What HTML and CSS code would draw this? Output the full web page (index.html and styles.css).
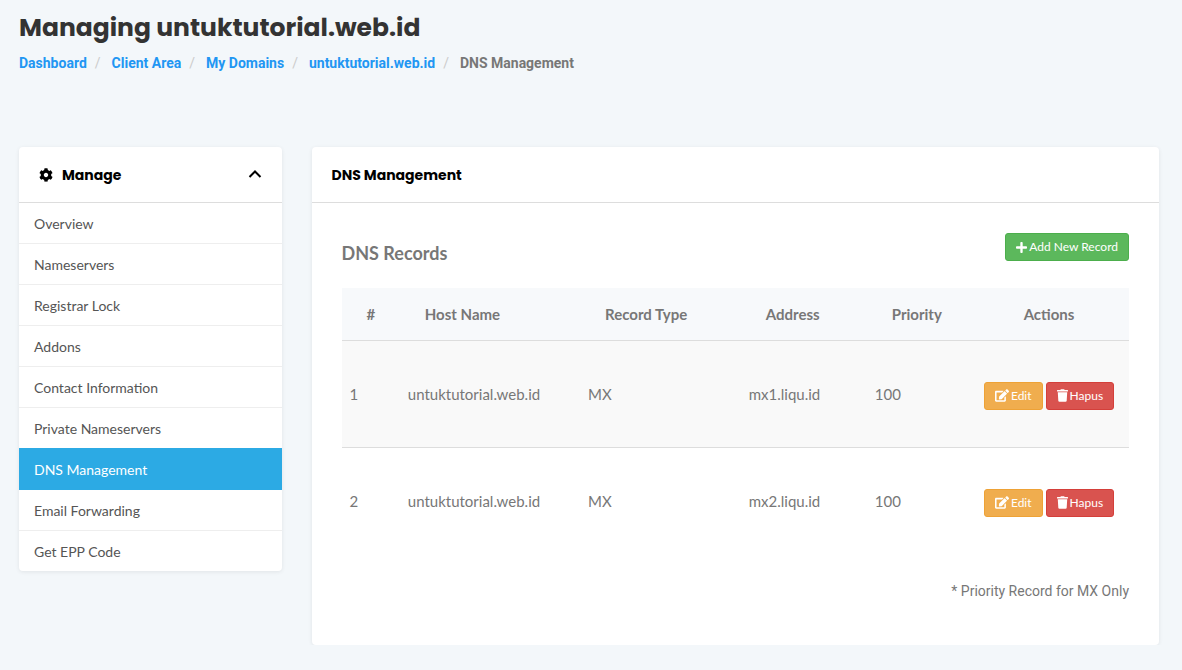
FILE: index.html
```
<!DOCTYPE html>
<html lang="en">
<head>
    <meta charset="UTF-8">
    <meta name="viewport" content="width=device-width, initial-scale=1.0">
    <title>Managing untuktutorial.web.id</title>
    <link rel="stylesheet" href="styles.css">
</head>
<body>
<svg class="sprite" aria-hidden="true">
    <symbol id="icon-edit" viewBox="0 0 576 512"><path d="M402.6 83.2l90.2 90.2c3.8 3.8 3.8 10 0 13.8L274.4 405.6l-92.8 10.3c-12.4 1.4-22.9-9.1-21.5-21.5l10.3-92.8L388.8 83.2c3.8-3.8 10-3.8 13.8 0zm162-22.9l-48.8-48.8c-15.2-15.2-39.9-15.2-55.2 0l-35.4 35.4c-3.8 3.8-3.8 10 0 13.8l90.2 90.2c3.8 3.8 10 3.8 13.8 0l35.4-35.4c15.2-15.3 15.2-40 0-55.2zM384 346.2V448H64V128h229.8c3.2 0 6.2-1.3 8.5-3.5l40-40c7.6-7.6 2.2-20.5-8.5-20.5H48C21.5 64 0 85.5 0 112v352c0 26.5 21.5 48 48 48h352c26.5 0 48-21.5 48-48V306.2c0-10.7-12.9-16-20.5-8.5l-40 40c-2.2 2.3-3.5 5.3-3.5 8.5z"/></symbol>
    <symbol id="icon-trash" viewBox="0 0 448 512"><path d="M432 32H312l-9.4-18.7A24 24 0 0 0 281.1 0H166.8a23.72 23.72 0 0 0-21.4 13.3L136 32H16A16 16 0 0 0 0 48v32a16 16 0 0 0 16 16h416a16 16 0 0 0 16-16V48a16 16 0 0 0-16-16zM53.2 467a48 48 0 0 0 47.9 45h245.8a48 48 0 0 0 47.9-45L416 128H32z"/></symbol>
</svg>
<div class="container">
    <header class="page-header">
        <h1>Managing untuktutorial.web.id</h1>
        <nav aria-label="Breadcrumb">
            <ol class="breadcrumb">
                <li><a href="#">Dashboard</a></li>
                <li><a href="#">Client Area</a></li>
                <li><a href="#">My Domains</a></li>
                <li><a href="#">untuktutorial.web.id</a></li>
                <li class="active">DNS Management</li>
            </ol>
        </nav>
    </header>
    <div class="row">
        <aside class="col-side">
            <div class="panel">
                <div class="panel-heading">
                    <svg class="icon-cog" viewBox="0 0 512 512"><path d="M487.4 315.7l-42.6-24.6c4.3-23.2 4.3-47 0-70.2l42.6-24.6c4.9-2.8 7.1-8.6 5.5-14-11.1-35.6-30-67.8-54.7-94.6-3.8-4.1-10-5.1-14.8-2.3L380.8 110c-17.9-15.4-38.5-27.3-60.8-35.1V25.8c0-5.6-3.9-10.5-9.4-11.7-36.7-8.2-74.3-7.8-109.2 0-5.5 1.2-9.4 6.1-9.4 11.7V75c-22.2 7.9-42.8 19.8-60.8 35.1L88.7 85.5c-4.9-2.8-11-1.9-14.8 2.3-24.7 26.7-43.6 58.9-54.7 94.6-1.7 5.4.6 11.2 5.5 14L67.3 221c-4.3 23.2-4.3 47 0 70.2l-42.6 24.6c-4.9 2.8-7.1 8.6-5.5 14 11.1 35.6 30 67.8 54.7 94.6 3.8 4.1 10 5.1 14.8 2.3l42.6-24.6c17.9 15.4 38.5 27.3 60.8 35.1v49.2c0 5.6 3.9 10.5 9.4 11.7 36.7 8.2 74.3 7.8 109.2 0 5.5-1.2 9.4-6.1 9.4-11.7v-49.2c22.2-7.9 42.8-19.8 60.8-35.1l42.6 24.6c4.9 2.8 11 1.9 14.8-2.3 24.7-26.7 43.6-58.9 54.7-94.6 1.5-5.5-.7-11.3-5.6-14.1zM256 336c-44.1 0-80-35.9-80-80s35.9-80 80-80 80 35.9 80 80-35.9 80-80 80z"/></svg>
                    <h2>Manage</h2>
                    <button class="panel-toggle" type="button" aria-label="Toggle menu">
                        <svg viewBox="0 0 14 14"><polyline points="1.5,9 7,3.5 12.5,9"/></svg>
                    </button>
                </div>
                <nav class="list-group">
                    <a href="#">Overview</a>
                    <a href="#">Nameservers</a>
                    <a href="#">Registrar Lock</a>
                    <a href="#">Addons</a>
                    <a href="#">Contact Information</a>
                    <a href="#">Private Nameservers</a>
                    <a href="#" class="active">DNS Management</a>
                    <a href="#">Email Forwarding</a>
                    <a href="#">Get EPP Code</a>
                </nav>
            </div>
        </aside>
        <main class="col-main">
            <div class="panel">
                <div class="panel-heading">
                    <h2>DNS Management</h2>
                </div>
                <div class="panel-body">
                    <div class="toolbar">
                        <h3>DNS Records</h3>
                        <button type="button" class="btn btn-success"><svg class="icon-plus" viewBox="0 0 448 512"><path d="M416 208H272V64c0-17.67-14.33-32-32-32h-32c-17.67 0-32 14.33-32 32v144H32c-17.67 0-32 14.33-32 32v32c0 17.67 14.33 32 32 32h144v144c0 17.67 14.33 32 32 32h32c17.67 0 32-14.33 32-32V304h144c17.67 0 32-14.33 32-32v-32c0-17.67-14.33-32-32-32z"/></svg>Add New Record</button>
                    </div>
                    <table class="table">
                        <colgroup>
                            <col class="c-num"><col class="c-host"><col class="c-type">
                            <col class="c-addr"><col class="c-prio"><col class="c-act">
                        </colgroup>
                        <thead>
                            <tr>
                                <th>#</th>
                                <th>Host Name</th>
                                <th>Record Type</th>
                                <th>Address</th>
                                <th>Priority</th>
                                <th class="actions">Actions</th>
                            </tr>
                        </thead>
                        <tbody>
                            <tr>
                                <td>1</td>
                                <td>untuktutorial.web.id</td>
                                <td>MX</td>
                                <td>mx1.liqu.id</td>
                                <td>100</td>
                                <td>
                                    <div class="btn-row">
                                        <button type="button" class="btn btn-warning"><svg class="icon-edit"><use href="#icon-edit"/></svg>Edit</button>
                                        <button type="button" class="btn btn-danger"><svg class="icon-trash"><use href="#icon-trash"/></svg>Hapus</button>
                                    </div>
                                </td>
                            </tr>
                            <tr>
                                <td>2</td>
                                <td>untuktutorial.web.id</td>
                                <td>MX</td>
                                <td>mx2.liqu.id</td>
                                <td>100</td>
                                <td>
                                    <div class="btn-row">
                                        <button type="button" class="btn btn-warning"><svg class="icon-edit"><use href="#icon-edit"/></svg>Edit</button>
                                        <button type="button" class="btn btn-danger"><svg class="icon-trash"><use href="#icon-trash"/></svg>Hapus</button>
                                    </div>
                                </td>
                            </tr>
                        </tbody>
                    </table>
                    <p class="note">* Priority Record for MX Only</p>
                </div>
            </div>
        </main>
    </div>
</div>
</body>
</html>
```
FILE: styles.css
```
* {
  box-sizing: border-box;
}
body {
  margin: 0;
  background-color: #f3f7fa;
  color: #777;
  font-family: Roboto, sans-serif;
  font-size: 14px;
  line-height: 20px;
}
.sprite {
  display: none;
}
svg {
  fill: currentColor;
  flex: none;
}
.container {
  padding: 12px 23px 0 19px;
}
.page-header {
  height: 135px;
}
h1, h2, h3 {
  margin: 0;
}
h1 {
  color: #333;
  font-family: Poppins, Inter, sans-serif;
  font-size: 25px;
  font-weight: 700;
  line-height: 32px;
}
.breadcrumb {
  display: flex;
  list-style: none;
  margin: 9px 0 0;
  padding: 0;
  font-weight: 700;
}
.breadcrumb li + li::before {
  content: "/";
  color: #ccc;
  font-weight: 400;
  padding: 0 11px 0 8px;
}
.breadcrumb a {
  color: #2196f3;
  text-decoration: none;
}
.row {
  display: flex;
  align-items: flex-start;
  margin: 0 -15px;
}
.col-side {
  width: 25%;
  padding: 0 15px;
}
.col-main {
  width: 75%;
  padding: 0 15px;
}
.panel {
  background-color: #fff;
  border-radius: 4px;
  box-shadow: 0 1px 4px rgba(0, 0, 0, 0.08);
  overflow: hidden;
}
.panel-heading {
  display: flex;
  align-items: center;
  height: 56px;
  padding: 0 20px;
  border-bottom: 1px solid #ddd;
  color: #000;
}
.panel-heading h2 {
  font-family: Poppins, Inter, sans-serif;
  font-size: 14px;
  font-weight: 700;
}
.icon-cog {
  width: 14px;
  height: 14px;
  margin-right: 9px;
}
.panel-toggle {
  display: flex;
  margin-left: auto;
  padding: 0;
  border: 0;
  background: none;
  color: #000;
}
.panel-toggle svg {
  width: 14px;
  height: 14px;
  fill: none;
  stroke: currentColor;
  stroke-width: 2;
}
.list-group a {
  display: block;
  height: 41px;
  padding: 11px 15px 0;
  border-bottom: 1px solid #eee;
  color: #555;
  font-family: Lato, sans-serif;
  text-decoration: none;
}
.list-group a:last-child {
  height: 40px;
  border-bottom: 0;
}
.list-group a.active {
  height: 42px;
  margin-top: -1px;
  padding-top: 12px;
  border-color: #2caae4;
  background-color: #2caae4;
  color: #fff;
}
.panel-body {
  padding: 30px 30px 44px;
  font-family: Lato, sans-serif;
}
.toolbar {
  display: flex;
  justify-content: space-between;
  align-items: flex-start;
  margin-bottom: 25px;
}
.toolbar h3 {
  padding-top: 10px;
  font-size: 18px;
  font-weight: 700;
  line-height: 20px;
}
.btn {
  display: inline-flex;
  align-items: center;
  height: 28px;
  padding: 0 10px;
  border: 1px solid;
  border-radius: 3px;
  color: #fff;
  font-family: Lato, sans-serif;
  font-size: 12px;
  line-height: 18px;
}
.btn-success {
  background-color: #5cb85c;
  border-color: #4cae4c;
}
.btn-warning {
  background-color: #f0ad4e;
  border-color: #eea236;
}
.btn-danger {
  background-color: #d9534f;
  border-color: #d43f3a;
}
.icon-plus {
  width: 11px;
  height: 13px;
  margin-right: 2px;
}
.icon-edit {
  width: 14px;
  height: 13px;
  margin-right: 2px;
}
.icon-trash {
  width: 11px;
  height: 13px;
  margin-right: 2px;
}
.table {
  width: 100%;
  border-collapse: collapse;
  table-layout: fixed;
  font-size: 15px;
}
.c-num { width: 7.4%; }
.c-host { width: 22.9%; }
.c-type { width: 20.4%; }
.c-addr { width: 16%; }
.c-prio { width: 13%; }
.table th {
  height: 52px;
  padding: 0 0 0 25px;
  background-color: #f7f9fb;
  font-weight: 700;
  text-align: left;
}
.table th.actions {
  padding: 0;
  text-align: center;
}
.table td {
  height: 107px;
  padding: 0 8px;
  border-top: 1px solid #ddd;
}
.table tbody tr:nth-child(odd) {
  background-color: #f9f9f9;
}
.btn-row {
  display: flex;
  justify-content: center;
  gap: 3px;
  padding-top: 4px;
}
.note {
  margin: 27px 0 0;
  font-family: Roboto, sans-serif;
  text-align: right;
}
```
